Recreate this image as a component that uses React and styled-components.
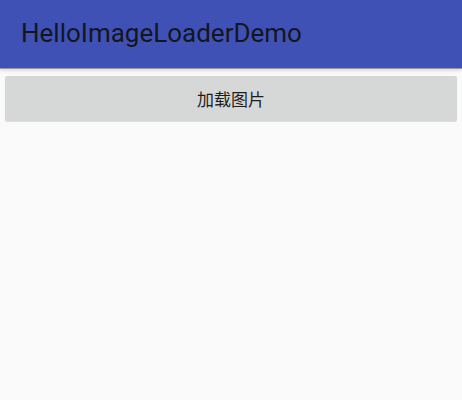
import React from "react";
import styled, { createGlobalStyle } from "styled-components";

const Global = createGlobalStyle`
  html, body { margin: 0; padding: 0; background: #fafafa; }
  body { font-family: "Roboto", "Noto Sans", "Noto Sans CJK SC", sans-serif; }
`;

const Screen = styled.div`
  width: 462px;
  height: 400px;
  background: #fafafa;
  display: flex;
  flex-direction: column;
`;

const AppBar = styled.header`
  height: 68px;
  background: #3f51b5;
  box-shadow: 0 1px 0 #9a9a9a, 0 2px 4px rgba(0, 0, 0, 0.18);
  display: flex;
  align-items: center;
  padding: 0 0 2px 21px;
  box-sizing: border-box;
  position: relative;
  z-index: 1;
`;

const Title = styled.h1`
  margin: 0;
  font-family: "Roboto", "Noto Sans", sans-serif;
  font-weight: 400;
  font-size: 26px;
  color: #14161f;
  letter-spacing: 0;
`;

const Content = styled.main`
  padding: 8px 5px;
  display: flex;
  flex-direction: column;
`;

const Button = styled.button`
  height: 45px;
  border: none;
  border-radius: 2px;
  background: #d6d7d7;
  box-shadow: 0 1px 1px rgba(0, 0, 0, 0.12);
  font-family: "Noto Sans CJK SC", sans-serif;
  font-size: 17px;
  color: #1e1e1e;
  display: flex;
  align-items: center;
  justify-content: center;
  cursor: pointer;
`;

export default function App() {
  return (
    <>
      <Global />
      <Screen>
        <AppBar>
          <Title>HelloImageLoaderDemo</Title>
        </AppBar>
        <Content>
          <Button>加载图片</Button>
        </Content>
      </Screen>
    </>
  );
}
